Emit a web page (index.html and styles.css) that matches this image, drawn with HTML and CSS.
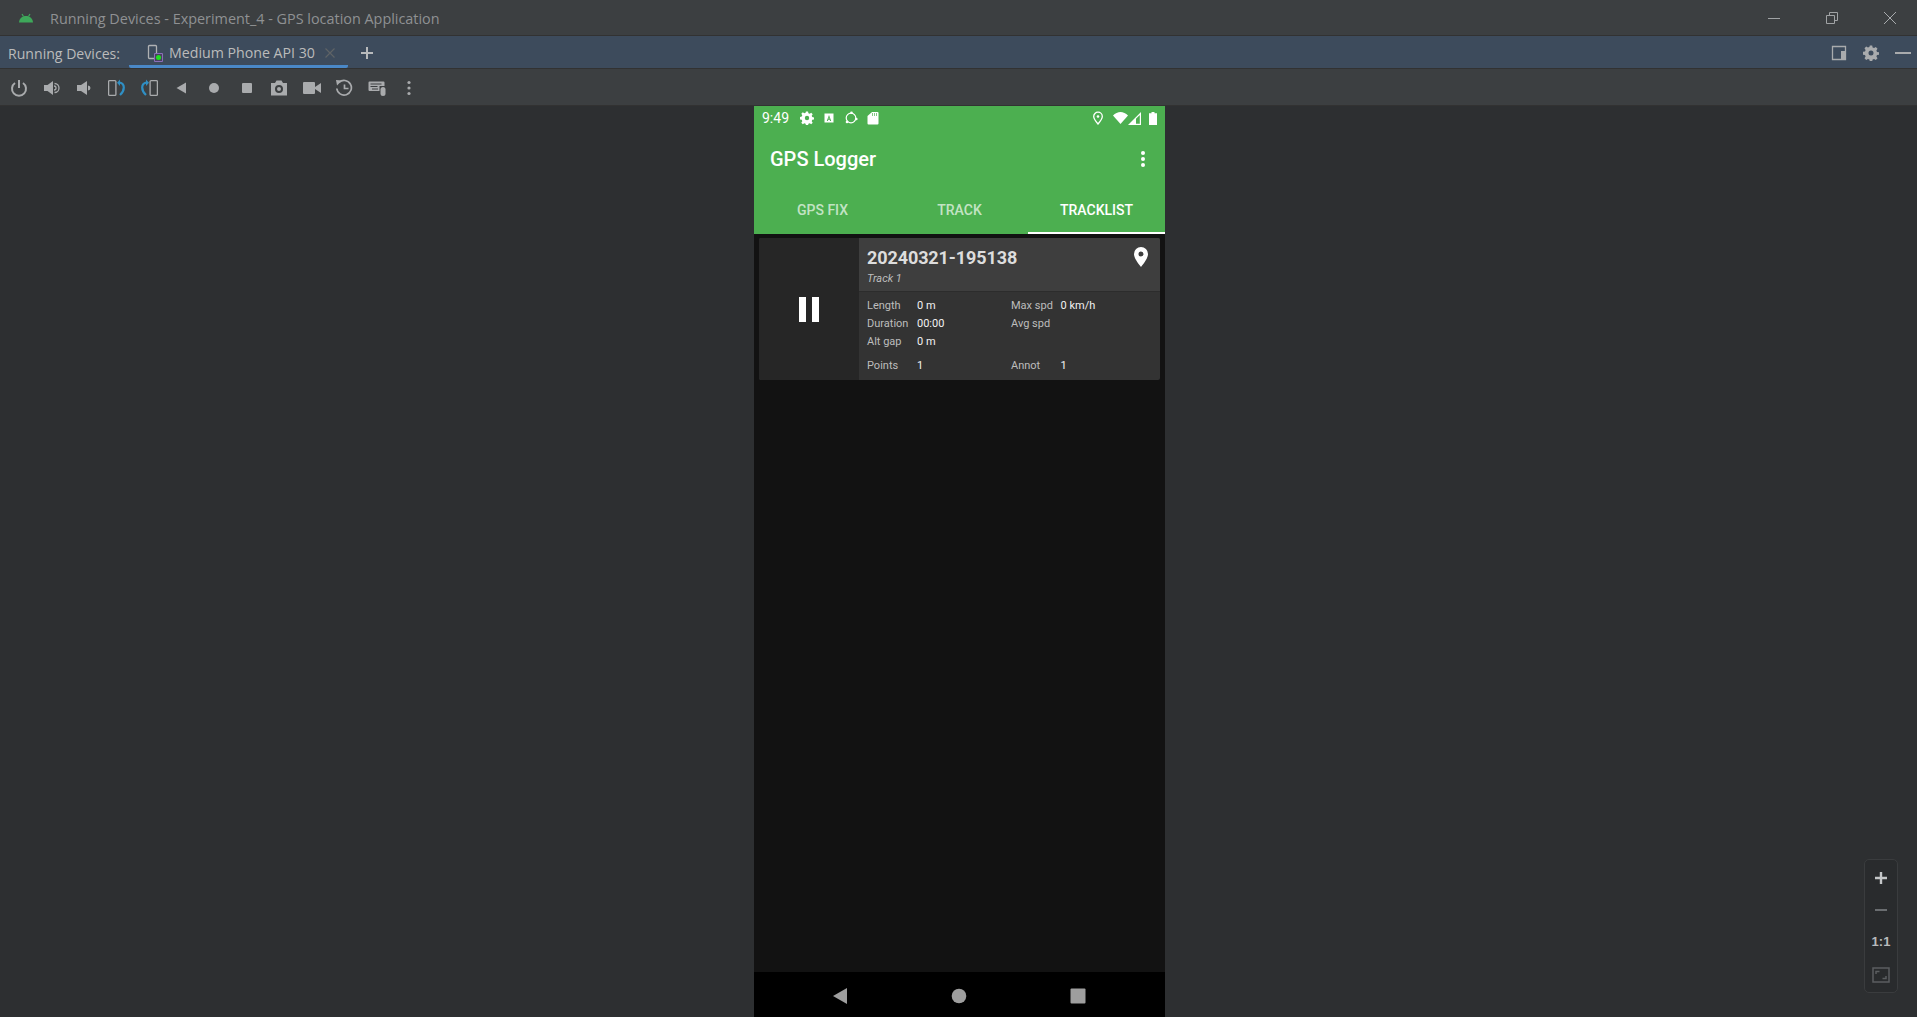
FILE: index.html
```html
<!DOCTYPE html>
<html lang="en">
<head>
    <meta charset="UTF-8">
    <title>Running Devices - Experiment_4 - GPS location Application</title>
    <link rel="stylesheet" href="styles.css">
</head>
<body>
    <header class="titlebar">
        <svg class="app-logo" width="16" height="10" viewBox="0 0 16 10"><path fill="#3ea85a" d="M1 9.500C1.300 5.500 4 3 8 3s6.700 2.500 7 6.500z"/><path stroke="#3ea85a" stroke-width="1.200" d="M4 1l1.500 2.500M12 1l-1.500 2.500"/></svg>
        <span class="window-title">Running Devices - Experiment_4 - GPS location Application</span>
        <div class="window-buttons">
            <svg width="14" height="14" viewBox="0 0 14 14"><path stroke="#a0a3a5" d="M1 7.500h12"/></svg>
            <svg width="14" height="14" viewBox="0 0 14 14"><path fill="none" stroke="#a0a3a5" d="M1.500 4.500h8v8h-8zM4.500 4.500v-3h8v8h-3"/></svg>
            <svg width="14" height="14" viewBox="0 0 14 14"><path stroke="#a8abad" d="M1 1l12 12M13 1L1 13"/></svg>
        </div>
    </header>

    <nav class="tabbar">
        <span class="tabbar-label">Running Devices:</span>
        <div class="tab">
            <svg width="16" height="18" viewBox="0 0 16 18"><path fill="none" stroke="#afb1b3" stroke-width="1.300" d="M7 14.500H2.500a1 1 0 0 1-1-1v-11a1 1 0 0 1 1-1h6a1 1 0 0 1 1 1V9"/><path fill="#4a4060" stroke="#8a6fb8" d="M7.500 9.500h8v8h-8z"/><circle cx="11.500" cy="13.500" r="2.500" fill="#1fe01f"/></svg>
            <span class="tab-name">Medium Phone API 30</span>
            <svg width="12" height="12" viewBox="0 0 12 12"><path stroke="#5f6366" stroke-width="1.200" d="M1.500 1.500l9 9M10.500 1.500l-9 9"/></svg>
        </div>
        <svg class="tab-add" width="14" height="14" viewBox="0 0 14 14"><path stroke="#b8babc" stroke-width="2" d="M7 1v12M1 7h12"/></svg>
        <div class="tabbar-tools">
            <svg width="16" height="16" viewBox="0 0 16 16"><path fill="none" stroke="#a9abad" stroke-width="1.300" d="M1.500 1.500h13v13h-13z"/><path fill="#a9abad" d="M10 6h4.500v8.500H10z"/></svg>
            <svg width="16" height="16" viewBox="0 0 16 16"><path fill="#a9abad" d="M6.800.500h2.400l.4 2 1.500.6 1.700-1.100 1.700 1.700-1.100 1.700.6 1.500 2 .4v2.400l-2 .4-.6 1.500 1.100 1.700-1.700 1.700-1.700-1.100-1.500.6-.4 2H6.800l-.4-2-1.500-.6-1.700 1.100-1.700-1.700 1.100-1.700-.6-1.500-2-.4V6.800l2-.4.6-1.500L1.500 3.200l1.700-1.700 1.700 1.100 1.500-.6zM8 5.500a2.500 2.500 0 1 0 0 5 2.500 2.500 0 0 0 0-5z"/></svg>
            <svg width="16" height="16" viewBox="0 0 16 16"><path stroke="#a9abad" stroke-width="2" d="M0 8h16"/></svg>
        </div>
    </nav>

    <div class="toolbar">
        <svg viewBox="0 0 18 18"><path fill="none" stroke="#a9abad" stroke-width="2" d="M5 4a7 7 0 1 0 8 0M9 1v8"/></svg>
        <svg viewBox="0 0 18 18"><path fill="#a9abad" d="M1 6h3.500L10 2v14l-5.500-4H1z"/><path fill="none" stroke="#a9abad" stroke-width="1.300" d="M11.500 4.500a4.500 4.500 0 0 1 0 9M11 7a2 2 0 0 1 0 4"/></svg>
        <svg viewBox="0 0 18 18"><path fill="#a9abad" d="M2 6h4l6-4v14l-6-4H2z"/><path fill="#a9abad" d="M13 6.500a2.500 2.500 0 0 1 0 5z"/></svg>
        <svg viewBox="0 0 18 18"><rect x="0.600" y="1.600" width="7.300" height="14.800" rx="1" fill="none" stroke="#a9abad" stroke-width="1.300"/><path fill="none" stroke="#2f8fc4" stroke-width="2.200" d="M11.500 3.500c3 .5 4.300 2.500 4.300 5 0 3-1.600 5.500-3.800 7.500"/><path fill="#2f8fc4" d="M12 .500v6.500l-3-3.200z"/></svg>
        <svg viewBox="0 0 18 18"><rect x="10.100" y="1.600" width="7.300" height="14.800" rx="1" fill="none" stroke="#a9abad" stroke-width="1.300"/><path fill="none" stroke="#2f8fc4" stroke-width="2.200" d="M6.500 3.500c-3 .5-4.300 2.500-4.300 5 0 3 1.600 5.500 3.800 7.500"/><path fill="#2f8fc4" d="M6 .500v6.500l3-3.200z"/></svg>
        <svg viewBox="0 0 18 18"><path fill="#a9abad" d="M13 3.500v11L3.500 9z"/></svg>
        <svg viewBox="0 0 18 18"><circle cx="9" cy="9" r="5" fill="#a9abad"/></svg>
        <svg viewBox="0 0 18 18"><rect x="4" y="4" width="10" height="10" rx="1" fill="#a9abad"/></svg>
        <svg viewBox="0 0 18 18"><path fill="#a9abad" fill-rule="evenodd" d="M1 4h4l1.500-2.500h5L13 4h4v12.500H1zM9 6a4 4 0 1 0 0 8 4 4 0 0 0 0-8zm0 2a2 2 0 1 1 0 4 2 2 0 0 1 0-4z"/></svg>
        <svg viewBox="0 0 18 18"><rect x="0" y="3" width="12" height="12" rx="1" fill="#a9abad"/><path fill="#a9abad" d="M12 8l6-4v10l-6-4z"/></svg>
        <svg viewBox="0 0 18 18"><path fill="none" stroke="#a9abad" stroke-width="1.700" d="M4 3.500a7.300 7.300 0 1 1-2.200 6M9.500 5.500v4h4"/><path fill="#a9abad" d="M1 1l6 .5-5 5z"/></svg>
        <svg viewBox="0 0 18 18"><path fill="#a9abad" d="M1.500 2.500h14a1 1 0 0 1 1 1V7h-5v5h-10a1 1 0 0 1-1-1V3.500a1 1 0 0 1 1-1z"/><path stroke="#3c3f41" d="M2.500 5h11M2.500 7.500h7M4 10h6"/><rect x="12.500" y="8" width="5" height="9" rx="2.500" fill="#a9abad"/></svg>
        <svg viewBox="0 0 18 18"><g fill="#a9abad"><circle cx="9" cy="3.500" r="1.600"/><circle cx="9" cy="9" r="1.600"/><circle cx="9" cy="14.500" r="1.600"/></g></svg>
    </div>

    <main class="stage">
        <div class="phone">
            <div class="appbar">
                <div class="statusbar">
                    <span class="clock">9:49</span>
                    <svg width="14" height="14" viewBox="0 0 16 16"><path fill="#fff" d="M6.800.500h2.400l.4 2 1.500.6 1.700-1.100 1.700 1.700-1.100 1.700.6 1.500 2 .4v2.400l-2 .4-.6 1.500 1.100 1.700-1.700 1.700-1.700-1.100-1.500.6-.4 2H6.800l-.4-2-1.500-.6-1.700 1.100-1.700-1.700 1.100-1.700-.6-1.500-2-.4V6.800l2-.4.6-1.500L1.500 3.200l1.700-1.700 1.700 1.100 1.500-.6zM8 5.500a2.500 2.500 0 1 0 0 5 2.500 2.500 0 0 0 0-5z"/></svg>
                    <svg width="12" height="12" viewBox="0 0 12 12"><path fill="#fff" fill-rule="evenodd" d="M1.500 1.500h9v9h-9zM6 3L3.800 9h1.100l.4-1.200h1.400L7.100 9h1.100zM6 5l.4 1.700h-.8z"/></svg>
                    <svg width="14" height="14" viewBox="0 0 14 14"><circle cx="7" cy="7" r="4.800" fill="none" stroke="#fff" stroke-width="1.200"/><g fill="#fff"><circle cx="7.500" cy="1.700" r="1.300"/><circle cx="12.300" cy="8" r="1.300"/><circle cx="3" cy="11" r="1.300"/></g></svg>
                    <svg width="12" height="14" viewBox="0 0 12 14"><path fill="#fff" d="M5 1h5.500a1 1 0 0 1 1 1v10.500a1 1 0 0 1-1 1h-9a1 1 0 0 1-1-1V5z"/><path stroke="#4caf50" stroke-width=".7" d="M5.500 2v3M7.500 2v3M9.500 2v3"/></svg>
                    <span class="status-gap"></span>
                    <svg class="status-pin" width="12" height="14" viewBox="0 0 12 14"><path fill="none" stroke="#fff" stroke-width="1.300" d="M6 13C3 9.500 1.700 7.500 1.700 5.500a4.300 4.300 0 0 1 8.600 0C10.300 7.500 9 9.500 6 13z"/><circle cx="6" cy="5.500" r="1.300" fill="#fff"/></svg>
                    <svg width="15" height="12" viewBox="0 0 15 12"><path fill="#fff" d="M0 3.500C2 1.500 5 0 7.500 0s5.500 1.500 7.500 3.500L7.500 12z"/></svg>
                    <svg class="status-signal" width="13" height="13" viewBox="0 0 13 13"><path fill="none" stroke="#fff" stroke-width="1.200" d="M1.500 12.400L12.400 1.500v10.900z"/><path fill="#fff" d="M.500 13L8 5.500V13z"/></svg>
                    <svg width="8" height="13" viewBox="0 0 8 13"><path fill="#fff" d="M2.500 0h3v1.300H8V13H0V1.300h2.500z"/></svg>
                </div>
                <div class="actionbar">
                    <span class="app-name">GPS Logger</span>
                    <svg width="4" height="16" viewBox="0 0 4 16"><g fill="#fff"><circle cx="2" cy="2" r="2"/><circle cx="2" cy="8" r="2"/><circle cx="2" cy="14" r="2"/></g></svg>
                </div>
                <div class="tabs">
                    <div class="apptab">GPS FIX</div>
                    <div class="apptab">TRACK</div>
                    <div class="apptab apptab-active">TRACKLIST</div>
                </div>
            </div>

            <div class="tracklist">
                <div class="card">
                    <div class="card-action">
                        <div class="pause"><span></span><span></span></div>
                    </div>
                    <div class="card-body">
                        <div class="card-head">
                            <div>
                                <div class="track-id">20240321-195138</div>
                                <div class="track-name">Track 1</div>
                            </div>
                            <svg width="14" height="20" viewBox="0 0 14 20"><path fill="#fff" fill-rule="evenodd" d="M7 0a7 7 0 0 1 7 7c0 4-3.500 8.500-7 13C3.500 15.500 0 11 0 7a7 7 0 0 1 7-7zm0 4.500a2.500 2.500 0 1 0 0 5 2.500 2.500 0 0 0 0-5z"/></svg>
                        </div>
                        <div class="stats">
                            <span class="stat-label">Length</span><span class="stat-value">0 m</span>
                            <span class="stat-label">Max spd</span><span class="stat-value">0 km/h</span>
                            <span class="stat-label">Duration</span><span class="stat-value">00:00</span>
                            <span class="stat-label">Avg spd</span><span class="stat-value"></span>
                            <span class="stat-label">Alt gap</span><span class="stat-value">0 m</span>
                            <span class="stat-label"></span><span class="stat-value"></span>
                        </div>
                        <div class="stats stats-last">
                            <span class="stat-label">Points</span><span class="stat-value">1</span>
                            <span class="stat-label">Annot</span><span class="stat-value">1</span>
                        </div>
                    </div>
                </div>
            </div>

            <div class="navbar">
                <svg width="16" height="18" viewBox="0 0 16 18"><path fill="#9e9e9e" d="M15 1v16L1 9z"/></svg>
                <svg width="16" height="16" viewBox="0 0 16 16"><circle cx="8" cy="8" r="7.300" fill="#9e9e9e"/></svg>
                <svg width="16" height="16" viewBox="0 0 16 16"><rect x="0.500" y="0.500" width="15" height="15" rx="1" fill="#9e9e9e"/></svg>
            </div>
        </div>

        <div class="zoom-panel">
            <svg width="14" height="14" viewBox="0 0 14 14"><path stroke="#c4c6c8" stroke-width="2.400" d="M7 1v12M1 7h12"/></svg>
            <svg width="14" height="14" viewBox="0 0 14 14"><path stroke="#6a6d70" stroke-width="2" d="M1 7h12"/></svg>
            <span class="zoom-ratio">1:1</span>
            <svg width="18" height="16" viewBox="0 0 18 16"><path fill="none" stroke="#5b5e60" stroke-width="1.500" d="M1 1h16v14H1z"/><path fill="none" stroke="#5b5e60" stroke-width="1.500" d="M4 7V4.500h3.500M14 9v2.500h-3.500"/></svg>
        </div>
    </main>
</body>
</html>
```

FILE: styles.css
```css
html, body {
    height: 100%;
}

body {
    margin: 0;
    display: flex;
    flex-direction: column;
    overflow: hidden;
    background: #2d2f31;
    font-family: "Open Sans", sans-serif;
}

svg {
    display: block;
    flex-shrink: 0;
}

.titlebar {
    display: flex;
    align-items: center;
    padding-top: 1px;
    height: 34px;
    background: #3c3f41;
    border-bottom: 1px solid #323232;
}

.app-logo {
    margin-left: 18px;
}

.window-title {
    margin-left: 16px;
    font-size: 14.4px;
    color: #8f9193;
}

.window-buttons {
    margin-left: auto;
    margin-right: 20px;
    display: flex;
    gap: 44px;
}

.tabbar {
    height: 33px;
    padding-top: 2px;
    display: flex;
    align-items: center;
    background: #3d4b5c;
    border-bottom: 1px solid #323232;
    box-sizing: border-box;
}

.tabbar-label {
    margin-left: 8px;
    font-size: 14.1px;
    color: #bbbbbb;
    white-space: nowrap;
}

.tab {
    align-self: stretch;
    box-sizing: border-box;
    width: 219px;
    margin-left: 9px;
    padding: 2px 13px 0 18px;
    display: flex;
    align-items: center;
    gap: 6px;
    border-bottom: 3px solid #4a88c7;
    border-radius: 0 0 2px 2px;
}

.tab-name {
    font-size: 14.2px;
    color: #bbbbbb;
    white-space: nowrap;
    margin-right: 3px;
}

.tab-add {
    margin-left: 12px;
}

.tabbar-tools {
    margin-left: auto;
    margin-right: 6px;
    display: flex;
    align-items: center;
    gap: 16px;
}

.toolbar {
    height: 37px;
    display: flex;
    align-items: center;
    gap: 14.5px;
    padding-left: 10px;
    padding-top: 1px;
    background: #3c3f41;
    border-bottom: 1px solid #323232;
    box-sizing: border-box;
}

.toolbar svg {
    width: 18px;
    height: 18px;
}

.stage {
    flex: 1;
    position: relative;
    display: flex;
    justify-content: center;
    padding-left: 2px;
    min-height: 0;
}

.phone {
    width: 411px;
    display: flex;
    flex-direction: column;
    background: #121212;
    font-family: Roboto, sans-serif;
}

.appbar {
    height: 128px;
    display: flex;
    flex-direction: column;
    background: #4caf50;
}

.statusbar {
    height: 24px;
    display: flex;
    align-items: center;
    gap: 9px;
    padding: 0 8px;
    color: #fff;
}

.clock {
    font-size: 14px;
    margin-right: 2px;
}

.status-gap {
    flex: 1;
}

.status-signal {
    margin-left: -9px;
    margin-right: -1px;
}

.actionbar {
    height: 56px;
    display: flex;
    align-items: center;
    justify-content: space-between;
    padding: 1px 20px 0 16px;
    box-sizing: border-box;
}

.app-name {
    font-size: 20px;
    font-weight: 500;
    color: #fff;
}

.tabs {
    flex: 1;
    display: flex;
}

.apptab {
    flex: 1;
    display: flex;
    align-items: center;
    justify-content: center;
    box-sizing: border-box;
    font-size: 14px;
    font-weight: 500;
    color: rgba(255, 255, 255, 0.68);
}

.apptab-active {
    color: #fff;
    border-bottom: 2px solid #fff;
    padding-top: 2px;
}

.tracklist {
    flex: 1;
    padding: 4px 5px;
}

.card {
    height: 142px;
    display: flex;
    border-radius: 2px;
    overflow: hidden;
    background: #333333;
}

.card-action {
    width: 100px;
    display: flex;
    align-items: center;
    justify-content: center;
    background: #262626;
}

.pause {
    display: flex;
    gap: 6px;
}

.pause span {
    width: 7px;
    height: 25px;
    background: #fff;
}

.card-body {
    flex: 1;
}

.card-head {
    height: 54px;
    display: flex;
    justify-content: space-between;
    padding: 9px 12px 0 8px;
    box-sizing: border-box;
    background: #3e3e3e;
    border-bottom: 1px solid #2c2c2c;
}

.track-id {
    font-size: 18px;
    font-weight: 700;
    letter-spacing: -0.1px;
    line-height: 21px;
    color: #dddddd;
}

.track-name {
    margin-top: 4px;
    font-size: 11px;
    font-style: italic;
    line-height: 13px;
    color: #bdbdbd;
}

.stats {
    display: grid;
    grid-template-columns: 50px 94px 49.5px 1fr;
    grid-auto-rows: 18px;
    align-items: center;
    padding: 4px 8px 0;
    font-size: 11px;
}

.stats-last {
    padding-top: 6px;
}

.stat-label {
    color: #bdbdbd;
}

.stat-value {
    color: #f2f2f2;
}

.navbar {
    height: 45px;
    flex-shrink: 0;
    display: flex;
    align-items: center;
    padding: 2px 79px 0 78px;
    box-sizing: border-box;
    justify-content: space-between;
    background: #000;
}

.zoom-panel {
    position: absolute;
    right: 19px;
    bottom: 24px;
    width: 34px;
    height: 134px;
    box-sizing: border-box;
    padding: 11px 0 9px;
    display: flex;
    flex-direction: column;
    align-items: center;
    justify-content: space-between;
    background: #292b2d;
    border: 1px solid #3a3c3e;
    border-radius: 5px;
}

.zoom-ratio {
    font-family: "Liberation Sans", sans-serif;
    font-size: 13px;
    font-weight: 700;
    color: #b8babc;
}
```
